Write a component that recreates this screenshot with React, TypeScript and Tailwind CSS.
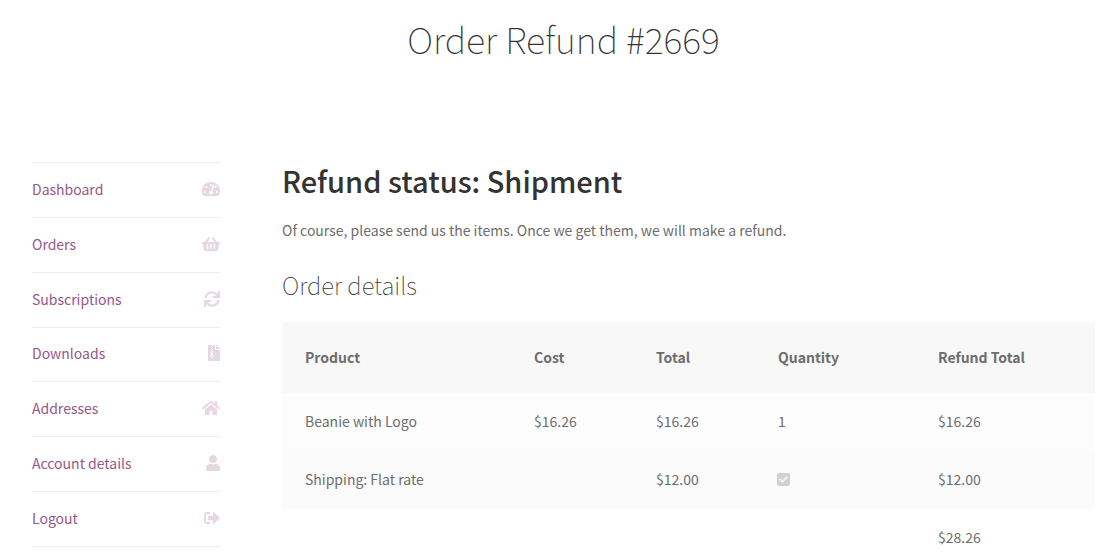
import React from 'react';
import { FaTachometerAlt, FaShoppingBasket, FaSync, FaFileArchive, FaHome, FaUser, FaSignOutAlt, FaCheck } from 'react-icons/fa';

const menuItems = [
  { label: 'Dashboard', href: '#dashboard', icon: FaTachometerAlt, width: 'w-[18px]' },
  { label: 'Orders', href: '#orders', icon: FaShoppingBasket, width: 'w-[18px]' },
  { label: 'Subscriptions', href: '#subscriptions', icon: FaSync, width: 'w-4' },
  { label: 'Downloads', href: '#downloads', icon: FaFileArchive, width: 'w-3' },
  { label: 'Addresses', href: '#addresses', icon: FaHome, width: 'w-[18px]' },
  { label: 'Account details', href: '#account', icon: FaUser, width: 'w-3.5' },
  { label: 'Logout', href: '#logout', icon: FaSignOutAlt, width: 'w-4' },
];

const AccountMenu: React.FC = () => (
  <nav aria-label="Account" className="w-[188px] shrink-0 border-t border-[#eeeeee]">
    <ul className="grid h-96 grid-rows-7">
      {menuItems.map(({ label, href, icon: Icon, width }) => (
        <li key={label} className="border-b border-[#eeeeee]">
          <a href={href} className="flex h-full items-center justify-between pb-0.5 text-[#96588a]">
            {label}
            <Icon className={`h-4 text-[#e6d7e2] ${width}`} />
          </a>
        </li>
      ))}
    </ul>
  </nav>
);

const RefundTable: React.FC = () => (
  <table className="w-full table-fixed text-left">
    <colgroup>
      <col />
      <col className="w-[122px]" />
      <col className="w-[122px]" />
      <col className="w-[160px]" />
      <col className="w-[180px]" />
    </colgroup>
    <thead className="bg-[#f8f8f8]">
      <tr className="h-[71px]">
        <th className="px-[23px] pb-0.5 font-semibold">Product</th>
        <th className="px-[23px] pb-0.5 font-semibold">Cost</th>
        <th className="px-[23px] pb-0.5 font-semibold">Total</th>
        <th className="px-[23px] pb-0.5 font-semibold">Quantity</th>
        <th className="px-[23px] pb-0.5 font-semibold">Refund Total</th>
      </tr>
    </thead>
    <tbody>
      <tr className="bg-[#fdfdfd]">
        <td className="px-[23px] pt-[15px] pb-[17px]">Beanie with Logo</td>
        <td className="px-[23px] pt-[15px] pb-[17px]">$16.26</td>
        <td className="px-[23px] pt-[15px] pb-[17px]">$16.26</td>
        <td className="px-[23px] pt-[15px] pb-[17px]">1</td>
        <td className="px-[23px] pt-[15px] pb-[17px]">$16.26</td>
      </tr>
      <tr className="bg-[#fbfbfb]">
        <td className="px-[23px] pt-[15px] pb-[17px]">Shipping: Flat rate</td>
        <td className="px-[23px] pt-[15px] pb-[17px]"></td>
        <td className="px-[23px] pt-[15px] pb-[17px]">$12.00</td>
        <td className="px-[23px] pt-[15px] pb-[17px]">
          <span className="relative -ml-px block size-[13px]">
            <input
              type="checkbox"
              checked
              disabled
              readOnly
              aria-label="Refund shipping"
              className="block size-[13px] appearance-none rounded-xs bg-[#d1d1d1]"
            />
            <FaCheck size={9} className="pointer-events-none absolute inset-0 m-auto text-[#f3f3f3]" />
          </span>
        </td>
        <td className="px-[23px] pt-[15px] pb-[17px]">$12.00</td>
      </tr>
      <tr>
        <td colSpan={4}></td>
        <td className="px-[23px] pt-[15px] pb-[17px]">$28.26</td>
      </tr>
    </tbody>
  </table>
);

const App: React.FC = () => {
  return (
    <div className="bg-white pr-[25px] pl-8 font-['Noto_Sans_CJK_SC',sans-serif] text-[14px] leading-[26px] text-[#6d6d6d]">
      <header className="pt-2 text-center">
        <h1 className="text-[36px] leading-[60px] font-thin text-[#333333]">Order Refund #2669</h1>
      </header>

      <div className="flex gap-[62px] pt-[94px]">
        <AccountMenu />

        <main className="min-w-0 flex-1">
          <h2 className="text-[29px] leading-9 font-medium text-[#333333]">Refund status: Shipment</h2>
          <p className="mt-[19px]">Of course, please send us the items. Once we get them, we will make a refund.</p>
          <h3 className="mt-6 mb-[19px] text-[24px] leading-9 font-thin text-[#333333]">Order details</h3>
          <RefundTable />
        </main>
      </div>
    </div>
  );
};

export default App;
